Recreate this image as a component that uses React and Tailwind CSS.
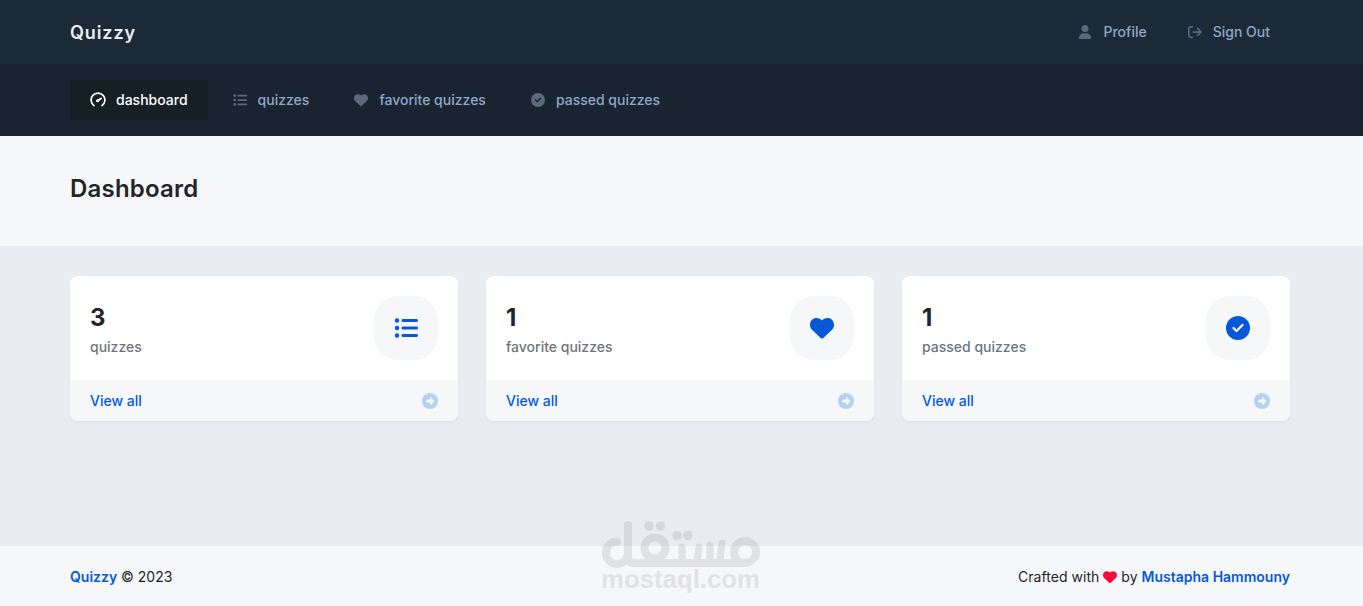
import React from 'react';
import {
  FaListUl,
  FaHeart,
  FaCircleCheck,
  FaCircleRight,
  FaUser,
  FaArrowRightFromBracket,
} from 'react-icons/fa6';

const SpeedometerIcon = ({ className }) => (
  <svg viewBox="0 0 16 16" fill="none" stroke="currentColor" strokeWidth="1.7" strokeLinecap="round" className={className}>
    <path d="M4 13.6A6.9 6.9 0 1 1 12 13.6" />
    <path d="M7.8 8.7 11 6.4" strokeWidth="1.8" />
    <circle cx="7.6" cy="8.8" r="0.7" fill="currentColor" />
  </svg>
);

const navItems = [
  { label: 'dashboard', icon: SpeedometerIcon, active: true },
  { label: 'quizzes', icon: FaListUl },
  { label: 'favorite quizzes', icon: FaHeart },
  { label: 'passed quizzes', icon: FaCircleCheck },
];

const stats = [
  { value: 3, label: 'quizzes', icon: FaListUl },
  { value: 1, label: 'favorite quizzes', icon: FaHeart },
  { value: 1, label: 'passed quizzes', icon: FaCircleCheck },
];

const TopBar = () => (
  <header className="h-16 bg-[#1c2936]">
    <div className="ml-[70px] flex h-full w-[1220px] items-center justify-between">
      <a href="#" className="pt-0.5 text-lg leading-7 font-semibold tracking-[0.9px] text-[#ebeef2]">Quizzy</a>
      <div className="flex items-center gap-10 pr-5 text-sm font-medium text-[#8fa7c9]">
        <a href="#" className="flex items-center gap-2.5">
          <FaUser className="h-3.5 w-4 text-[#5a6a7a]" />
          Profile
        </a>
        <a href="#" className="flex items-center gap-2.5">
          <FaArrowRightFromBracket className="h-3.5 w-4 text-[#5a6a7a]" />
          Sign Out
        </a>
      </div>
    </div>
  </header>
);

const Navigation = () => (
  <nav className="h-[72px] bg-[#192430] py-4">
    <ul className="ml-[70px] flex w-[1220px] gap-1">
      {navItems.map(({ label, icon: Icon, active }) => (
        <li key={label}>
          <a
            href="#"
            className={
              active
                ? 'flex h-10 items-center gap-2.5 bg-[#151f26] px-5 text-sm font-medium text-white'
                : 'flex h-10 items-center gap-2.5 px-5 text-sm font-medium text-[#8fa7c9]'
            }
          >
            <Icon className={active ? 'h-4 w-4' : 'h-3.5 w-4 text-[#5a6a7a]'} />
            {label}
          </a>
        </li>
      ))}
    </ul>
  </nav>
);

const StatCard = ({ value, label, icon: Icon }) => (
  <div className="overflow-hidden rounded-lg bg-white shadow-[0_1px_2px_rgba(210,216,225,0.7)]">
    <div className="flex h-[104px] items-center justify-between px-5">
      <div className="pt-1.5">
        <div className="text-2xl leading-[30px] font-bold">{value}</div>
        <div className="mt-0.5 text-sm leading-6 font-medium text-[#6c757d]">{label}</div>
      </div>
      <div className="flex h-16 w-16 items-center justify-center rounded-3xl bg-[#f6f7f9]">
        <Icon className="h-6 w-6 text-[#0559d9]" />
      </div>
    </div>
    <a href="#" className="flex h-[41px] items-center justify-between bg-[#f6f7f9] px-5 text-sm font-medium text-[#0559d9]">
      View all
      <FaCircleRight className="h-4 w-4 text-[#b4d2f3]" />
    </a>
  </div>
);

const Watermark = () => (
  <svg viewBox="0 0 180 96" className="pointer-events-none absolute top-[510px] left-[590px] h-24 w-[180px] opacity-[0.15]">
    <g fill="none" stroke="#776f6a" strokeWidth="8" strokeLinecap="round" strokeLinejoin="round">
      <path d="M27 32C20 31 16 37 16 43A11 11 0 0 0 38 43V15M38 47Q38 53 44 53H155" />
      <circle cx="65" cy="38" r="10.5" />
      <circle cx="155" cy="42" r="11" />
      <path d="M92 37V51M109 37 107 51M120 35V51M132 33 130 51" strokeWidth="7" />
    </g>
    <g fill="#776f6a">
      <circle cx="59" cy="16" r="4.8" />
      <circle cx="70.5" cy="16" r="4.8" />
      <circle cx="87" cy="25.5" r="4.8" />
      <circle cx="98" cy="25.5" r="4.8" />
      <text x="11" y="78" textLength="159" lengthAdjust="spacingAndGlyphs" fontFamily="Liberation Sans, sans-serif" fontSize="26" fontWeight="700">mostaql.com</text>
    </g>
  </svg>
);

export default function App() {
  return (
    <div className="relative flex h-[606px] w-[1363px] flex-col overflow-hidden bg-[#e9ecf1] font-['Inter',sans-serif] text-[#212529]">
      <TopBar />
      <Navigation />
      <div className="h-[110px] bg-[#f6f7f9]">
        <div className="ml-[70px] w-[1220px] pt-[38px]">
          <h1 className="text-2xl leading-[30px] font-semibold tracking-[0.2px]">Dashboard</h1>
        </div>
      </div>
      <main className="ml-[70px] grid w-[1220px] flex-1 grid-cols-3 items-start gap-7 pt-[30px]">
        {stats.map((stat) => (
          <StatCard key={stat.label} {...stat} />
        ))}
      </main>
      <footer className="h-[60px] bg-[#f6f7f9]">
        <div className="ml-[70px] flex h-full w-[1220px] items-center justify-between pt-[2px] text-sm">
          <div>
            <a href="#" className="font-semibold text-[#0559d9]">Quizzy</a> © 2023
          </div>
          <div className="flex items-center gap-1">
            <span className="tracking-[0.04px]">Crafted with</span>
            <FaHeart className="h-3.5 w-3.5 text-[#f7093c]" />
            <span>by</span>
            <a href="#" className="font-semibold text-[#0559d9]">Mustapha Hammouny</a>
          </div>
        </div>
      </footer>
      <Watermark />
    </div>
  );
}
